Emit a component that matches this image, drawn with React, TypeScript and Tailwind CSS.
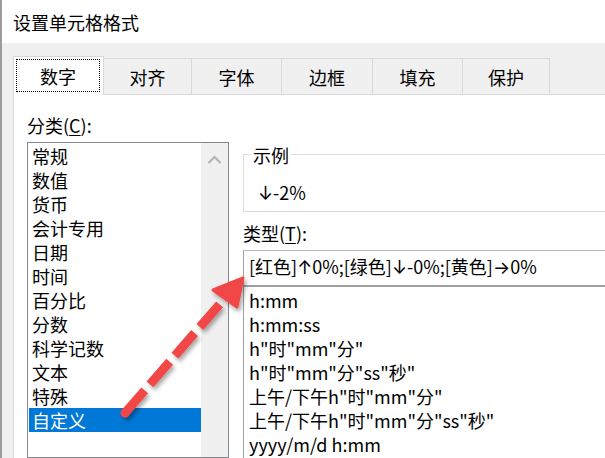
const tabs = [
  { label: "数字", w: "w-[91px]", active: true },
  { label: "对齐", w: "w-[88px]" },
  { label: "字体", w: "w-[90px]" },
  { label: "边框", w: "w-[91px]" },
  { label: "填充", w: "w-[90px]" },
  { label: "保护", w: "w-[87px]" },
]

const categories = ["常规", "数值", "货币", "会计专用", "日期", "时间", "百分比", "分数", "科学记数", "文本", "特殊", "自定义"]

const formats = [
  "h:mm",
  "h:mm:ss",
  'h"时"mm"分"',
  'h"时"mm"分"ss"秒"',
  '上午/下午h"时"mm"分"',
  '上午/下午h"时"mm"分"ss"秒"',
  "yyyy/m/d h:mm",
]

// narrow arrows, the CJK font draws them full width
function Ar({ c }: { c: string }) {
  return <span className="font-['Inter','DejaVu_Sans',sans-serif]">{c}</span>
}

function Tabs() {
  return (
    <div className="h-[51px] shrink-0 flex items-end">
      {tabs.map((t) =>
        t.active ? (
          <div
            key={t.label}
            className={`${t.w} h-[39px] -mb-px relative z-10 bg-white border border-b-0 border-[#d9d9d9] flex pt-[2px] pl-[2px] pr-[3px] pb-[3px]`}
          >
            <div className="flex-1 border border-dotted border-black flex items-center justify-center">{t.label}</div>
          </div>
        ) : (
          <div
            key={t.label}
            className={`${t.w} h-[36px] border-t border-r border-[#d9d9d9] flex items-center justify-center`}
          >
            {t.label}
          </div>
        )
      )}
    </div>
  )
}

function CategoryList() {
  return (
    <div className="w-[202px] shrink-0 flex flex-col">
      <div className="mt-[19px] leading-[22px]">
        分类(<span className="underline underline-offset-2">C</span>):
      </div>
      <div className="mt-[6px] flex-1 border border-[#828790] flex">
        <div className="w-[172px] ml-px pt-px">
          {categories.map((c) => (
            <div
              key={c}
              className={c === "自定义" ? "h-[24px] pl-[3px] bg-[#0078d7] text-white" : "h-[24px] pl-[3px]"}
            >
              {c}
            </div>
          ))}
        </div>
        <div className="w-[27px] bg-[#f0f0f0]">
          <svg width="27" height="27" viewBox="0 0 27 27">
            <path d="M7.5 20 L13.5 14 L19.5 20" fill="none" stroke="#b0b0b0" strokeWidth="2" />
          </svg>
        </div>
      </div>
    </div>
  )
}

function TypePanel() {
  return (
    <div className="w-[420px] shrink-0 flex flex-col">
      <div className="mt-[59px] h-[58px] border border-[#dcdcdc] relative">
        <span className="absolute left-[7px] top-[-11px] bg-white px-[2px] leading-[22px]">示例</span>
        <div className="mt-[26px] pl-[14px] leading-[22px]">
          <Ar c="↓" />-2%
        </div>
      </div>
      <div className="mt-[10px] leading-[22px]">
        类型(<span className="underline underline-offset-2">T</span>):
      </div>
      <div className="mt-[6px] h-[37px] border-t border-t-[#b9b9b9] border-l border-l-[#a0a0a0] border-b-2 border-b-[#a0a0a0] pl-[5px] pt-[4px] leading-[22px]">
        [红色]<Ar c="↑" />0%;[绿色]<Ar c="↓" />-0%;[黄色]<Ar c="→" />0%
      </div>
      <div className="flex-1 border-l border-[#a0a0a0] pt-px">
        {formats.map((f) => (
          <div key={f} className="h-[24px] pl-[5px]">
            {f}
          </div>
        ))}
      </div>
    </div>
  )
}

function Arrow() {
  return (
    <svg className="absolute top-0 left-[-2px] pointer-events-none" width="605" height="458" viewBox="0 0 605 458">
      <defs>
        <filter id="sh" x="-20%" y="-20%" width="140%" height="140%">
          <feDropShadow dx="2" dy="3" stdDeviation="2" floodColor="#000" floodOpacity="0.35" />
        </filter>
      </defs>
      <g filter="url(#sh)" fill="#f14646" stroke="#f14646">
        <line x1="125" y1="413" x2="226" y2="297" strokeWidth="9" strokeDasharray="30 8" />
        <circle cx="125" cy="413" r="4.5" stroke="none" />
        <polygon points="213,290 243,278 237,307" strokeWidth="3" strokeLinejoin="round" />
      </g>
    </svg>
  )
}

export default function App() {
  return (
    <div className="relative w-[605px] h-[458px] overflow-hidden flex flex-col border-l-2 border-[#9c9c9c] bg-[#f0f0f0] text-black font-['Noto_Sans_CJK_SC',sans-serif] text-[18px] leading-[24px]">
      <div className="h-[43px] shrink-0 bg-white pl-[11px] flex items-center">设置单元格格式</div>
      <div className="flex-1 flex flex-col pl-[11px] min-h-0">
        <Tabs />
        <div className="flex-1 min-h-0 bg-white border-l border-t border-[#d9d9d9] flex gap-[14px] pl-[13px]">
          <CategoryList />
          <TypePanel />
        </div>
      </div>
      <Arrow />
    </div>
  )
}
